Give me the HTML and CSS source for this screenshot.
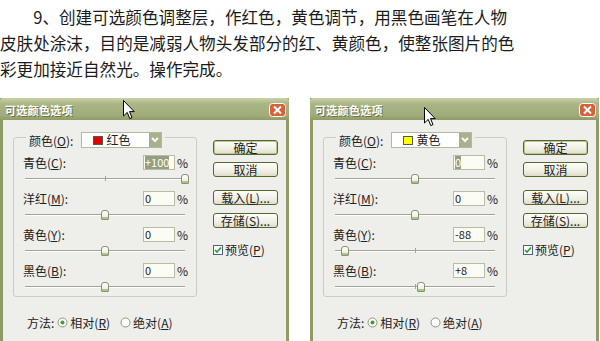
FILE: index.html
```html
<!DOCTYPE html>
<html lang="zh-CN">
<head>
    <meta charset="UTF-8">
    <title>可选颜色</title>
    <link rel="stylesheet" href="styles.css">
</head>
<body>

    <!-- Step text -->
    <p class="intro">9、创建可选颜色调整层，作红色，黄色调节，用黑色画笔在人物皮肤处涂沫，目的是减弱人物头发部分的红、黄颜色，使整张图片的色彩更加接近自然光。操作完成。</p>

    <div class="shots">

        <!-- Red dialog -->
        <div class="dialog">
            <div class="titlebar">
                <span class="title">可选颜色选项</span>
                <span class="close-btn">
                    <svg width="17" height="14" viewBox="0 0 17 14"><rect x="0.5" y="0.5" width="16" height="13" rx="3" fill="#d6613b" stroke="#fff"/><path d="M5 3.5 L12 10.5 M12 3.5 L5 10.5" stroke="#fff" stroke-width="2"/></svg>
                </span>
            </div>
            <div class="dialog-body">
                <div class="main-col">
                    <div class="group">
                        <div class="color-row">
                            <span>颜色(<u>O</u>):</span>
                            <div class="select">
                                <span class="swatch red"></span>
                                <span class="select-text">红色</span>
                                <span class="select-arrow"><svg width="8" height="6" viewBox="0 0 8 6"><path d="M1 1 L4 4 L7 1" fill="none" stroke="#fff" stroke-width="2"/></svg></span>
                            </div>
                        </div>
                        <div class="adjust">
                            <div class="field-row"><span class="label">青色(<u>C</u>):</span><span class="value"><span class="sel">+100</span></span><span class="pct">%</span></div>
                            <div class="slider"><span class="thumb" style="left:100%"></span></div>
                        </div>
                        <div class="adjust">
                            <div class="field-row"><span class="label">洋红(<u>M</u>):</span><span class="value">0</span><span class="pct">%</span></div>
                            <div class="slider"><span class="thumb" style="left:50%"></span></div>
                        </div>
                        <div class="adjust">
                            <div class="field-row"><span class="label">黄色(<u>Y</u>):</span><span class="value">0</span><span class="pct">%</span></div>
                            <div class="slider"><span class="thumb" style="left:50%"></span></div>
                        </div>
                        <div class="adjust">
                            <div class="field-row"><span class="label">黑色(<u>B</u>):</span><span class="value">0</span><span class="pct">%</span></div>
                            <div class="slider"><span class="thumb" style="left:50%"></span></div>
                        </div>
                    </div>
                    <div class="method">
                        <span>方法:</span>
                        <svg class="radio" width="11" height="11" viewBox="0 0 11 11"><circle cx="5.5" cy="5.5" r="4.5" fill="#fff" stroke="#8d9875"/><circle cx="5.5" cy="5.5" r="2" fill="#3f9a3a"/></svg>
                        <span>相对(<u>R</u>)</span>
                        <svg class="radio second" width="11" height="11" viewBox="0 0 11 11"><circle cx="5.5" cy="5.5" r="4.5" fill="#fff" stroke="#8d9875"/></svg>
                        <span>绝对(<u>A</u>)</span>
                    </div>
                </div>
                <div class="btn-col">
                    <div class="btn default">确定</div>
                    <div class="btn cancel">取消</div>
                    <div class="btn load">载入(<u>L</u>)...</div>
                    <div class="btn save">存储(<u>S</u>)...</div>
                    <div class="check">
                        <svg width="10" height="10" viewBox="0 0 10 10"><rect x="0.5" y="0.5" width="9" height="9" fill="#fff" stroke="#4f6080"/><path d="M2 5 L4 7 L8 2.5" fill="none" stroke="#21a121" stroke-width="1.6"/></svg>
                        <span>预览(<u>P</u>)</span>
                    </div>
                </div>
            </div>
            <svg class="cursor" width="12" height="20" viewBox="0 0 12 20"><path d="M0.5 0.5 L0.5 16 L4.2 12.4 L6.8 18.6 L9 17.6 L6.5 11.6 L11.2 11.6 Z" fill="#fff" stroke="#000"/></svg>
        </div>

        <!-- Yellow dialog -->
        <div class="dialog">
            <div class="titlebar">
                <span class="title">可选颜色选项</span>
                <span class="close-btn">
                    <svg width="17" height="14" viewBox="0 0 17 14"><rect x="0.5" y="0.5" width="16" height="13" rx="3" fill="#d6613b" stroke="#fff"/><path d="M5 3.5 L12 10.5 M12 3.5 L5 10.5" stroke="#fff" stroke-width="2"/></svg>
                </span>
            </div>
            <div class="dialog-body">
                <div class="main-col">
                    <div class="group">
                        <div class="color-row">
                            <span>颜色(<u>O</u>):</span>
                            <div class="select">
                                <span class="swatch yellow"></span>
                                <span class="select-text">黄色</span>
                                <span class="select-arrow"><svg width="8" height="6" viewBox="0 0 8 6"><path d="M1 1 L4 4 L7 1" fill="none" stroke="#fff" stroke-width="2"/></svg></span>
                            </div>
                        </div>
                        <div class="adjust">
                            <div class="field-row"><span class="label">青色(<u>C</u>):</span><span class="value"><span class="sel">0</span></span><span class="pct">%</span></div>
                            <div class="slider"><span class="thumb" style="left:50%"></span></div>
                        </div>
                        <div class="adjust">
                            <div class="field-row"><span class="label">洋红(<u>M</u>):</span><span class="value">0</span><span class="pct">%</span></div>
                            <div class="slider"><span class="thumb" style="left:50%"></span></div>
                        </div>
                        <div class="adjust">
                            <div class="field-row"><span class="label">黄色(<u>Y</u>):</span><span class="value">-88</span><span class="pct">%</span></div>
                            <div class="slider"><span class="thumb" style="left:6%"></span></div>
                        </div>
                        <div class="adjust">
                            <div class="field-row"><span class="label">黑色(<u>B</u>):</span><span class="value">+8</span><span class="pct">%</span></div>
                            <div class="slider"><span class="thumb" style="left:54%"></span></div>
                        </div>
                    </div>
                    <div class="method">
                        <span>方法:</span>
                        <svg class="radio" width="11" height="11" viewBox="0 0 11 11"><circle cx="5.5" cy="5.5" r="4.5" fill="#fff" stroke="#8d9875"/><circle cx="5.5" cy="5.5" r="2" fill="#3f9a3a"/></svg>
                        <span>相对(<u>R</u>)</span>
                        <svg class="radio second" width="11" height="11" viewBox="0 0 11 11"><circle cx="5.5" cy="5.5" r="4.5" fill="#fff" stroke="#8d9875"/></svg>
                        <span>绝对(<u>A</u>)</span>
                    </div>
                </div>
                <div class="btn-col">
                    <div class="btn default">确定</div>
                    <div class="btn cancel">取消</div>
                    <div class="btn load">载入(<u>L</u>)...</div>
                    <div class="btn save">存储(<u>S</u>)...</div>
                    <div class="check">
                        <svg width="10" height="10" viewBox="0 0 10 10"><rect x="0.5" y="0.5" width="9" height="9" fill="#fff" stroke="#4f6080"/><path d="M2 5 L4 7 L8 2.5" fill="none" stroke="#21a121" stroke-width="1.6"/></svg>
                        <span>预览(<u>P</u>)</span>
                    </div>
                </div>
            </div>
            <svg class="cursor second" width="12" height="20" viewBox="0 0 12 20"><path d="M0.5 0.5 L0.5 16 L4.2 12.4 L6.8 18.6 L9 17.6 L6.5 11.6 L11.2 11.6 Z" fill="#fff" stroke="#000"/></svg>
        </div>

    </div>

</body>
</html>
```

FILE: styles.css
```css
body {
    margin: 0;
    width: 600px;
    height: 341px;
    overflow: hidden;
    background-color: #fff;
    color: #222;
    font-family: "Noto Sans CJK SC", sans-serif;
}

/* Step text */
.intro {
    margin: 0;
    padding-top: 4px;
    width: 520px;
    font-size: 16.6px;
    line-height: 26px;
    text-indent: 2em;
    color: #1c1c1c;
}

.shots {
    display: flex;
    gap: 21px;
    margin-top: 16px;
}

/* Dialog window */
.dialog {
    position: relative;
    width: 289px;
    height: 243px;
    box-sizing: border-box;
    background-color: #eeeeea;
    border: 3px solid #8f9c66;
    border-top: none;
    border-bottom: none;
}

.titlebar {
    height: 22px;
    margin: 0 -3px;
    padding: 2px 3px 0 5px;
    box-sizing: border-box;
    display: flex;
    align-items: center;
    justify-content: space-between;
    background: linear-gradient(#cbd2aa, #abb686 25%, #9fab79 80%, #8f9c66);
    border-radius: 3px 3px 0 0;
}

.title {
    color: #fff;
    font-size: 11px;
    font-weight: bold;
    letter-spacing: 0.3px;
    text-shadow: 1px 1px 0 #6b7645;
}

.close-btn svg {
    display: block;
}

.dialog-body {
    display: flex;
    padding: 17px 0 0 10px;
    font-size: 12px;
}

/* Group box */
.group {
    width: 184px;
    box-sizing: border-box;
    border: 1px solid #cdcdbf;
    border-radius: 3px;
    padding: 0 9px 2px;
}

.color-row {
    display: flex;
    align-items: center;
    gap: 8px;
    width: fit-content;
    height: 16px;
    margin: -6px 0 0 3px;
    padding: 0 3px;
    background-color: #eeeeea;
}

.select {
    width: 81px;
    height: 16px;
    box-sizing: border-box;
    display: flex;
    align-items: center;
    padding-left: 11px;
    border: 1px solid #b3b9a1;
    background-color: #fff;
}

.swatch {
    width: 10px;
    height: 9px;
    box-sizing: border-box;
    border: 1px solid #555;
}

.swatch.red {
    background-color: #e00000;
}

.swatch.yellow {
    background-color: #ffff00;
}

.select-text {
    flex: 1;
    margin-left: 3px;
    line-height: 14px;
}

.select-arrow {
    width: 12px;
    height: 14px;
    display: flex;
    align-items: center;
    justify-content: center;
    background-color: #a7b18a;
}

.adjust {
    margin-top: 5px;
}

.color-row + .adjust {
    margin-top: 7px;
}

.field-row {
    display: flex;
    align-items: center;
    height: 15px;
}

.label {
    flex: 1;
}

.value {
    width: 32px;
    height: 15px;
    box-sizing: border-box;
    padding-left: 1px;
    border: 1px solid #b6bda3;
    background-color: #fcfcf4;
    font-size: 11px;
    line-height: 13px;
    white-space: nowrap;
    overflow: hidden;
}

.sel {
    background-color: #959f80;
    color: #fff;
}

.pct {
    width: 10px;
    margin-left: 2px;
}

/* Slider */
.slider {
    position: relative;
    height: 16px;
    margin: 0 2px;
}

.slider::before {
    content: "";
    position: absolute;
    left: 0;
    right: 0;
    top: 8px;
    height: 1px;
    background-color: #a3a397;
    border-bottom: 1px solid #fff;
}

.slider::after {
    content: "";
    position: absolute;
    left: 50%;
    top: 6px;
    width: 1px;
    height: 5px;
    background-color: #a3a397;
}

.thumb {
    position: absolute;
    top: 4px;
    z-index: 1;
    width: 8px;
    height: 10px;
    margin-left: -4px;
    box-sizing: border-box;
    border: 1px solid #86907a;
    border-radius: 3px 3px 1px 1px;
    background: linear-gradient(#fdfdf8, #e9e9de);
    box-shadow: inset 0 -2px 0 #a9c77e;
}

/* Method radios */
.method {
    display: flex;
    align-items: center;
    height: 14px;
    margin: 18px 0 0 14px;
}

.radio {
    margin: 0 2px 0 3px;
}

.radio.second {
    margin-left: 10px;
}

/* Buttons */
.btn-col {
    width: 65px;
    margin-left: 16px;
    padding-top: 3px;
    display: flex;
    flex-direction: column;
}

.btn {
    height: 15px;
    box-sizing: border-box;
    border: 1px solid #55662f;
    border-radius: 3px;
    background: linear-gradient(#fdfdf9, #f0efe4 60%, #dedcc9);
    line-height: 13px;
    text-align: center;
}

.btn.default {
    box-shadow: inset 0 0 0 1px #b9c88f;
}

.btn.cancel {
    margin-top: 7px;
}

.btn.load {
    margin-top: 13px;
}

.btn.save {
    margin-top: 8px;
}

.check {
    display: flex;
    align-items: center;
    gap: 2px;
    margin-top: 13px;
}

/* Mouse pointer over the dialog */
.cursor {
    position: absolute;
    left: 120px;
    top: 2px;
}

.cursor.second {
    left: 111px;
    top: 9px;
}
```
